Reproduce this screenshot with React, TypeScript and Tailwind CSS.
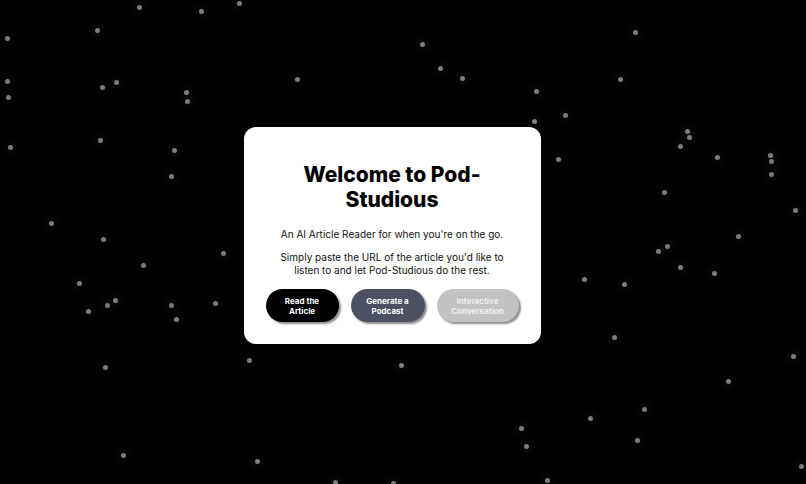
import React from 'react'

// particle field behind the welcome card
const particles: [number, number][] = [
  [139, 7], [201, 11], [239, 3], [97, 30], [7, 38], [7, 81], [8, 97], [102, 87], [116, 82],
  [186, 92], [187, 101], [10, 147], [100, 140], [174, 150], [635, 32], [620, 79], [565, 115],
  [687, 131], [689, 137], [680, 146], [717, 157], [770, 155], [558, 159], [422, 44], [440, 68],
  [462, 78], [297, 79], [536, 91], [534, 121], [171, 176], [51, 223], [103, 239], [223, 253],
  [143, 265], [79, 283], [115, 300], [107, 305], [88, 311], [171, 305], [176, 319], [215, 303],
  [771, 161], [771, 174], [664, 192], [795, 210], [738, 236], [667, 246], [658, 251], [680, 267],
  [714, 273], [584, 279], [624, 284], [105, 367], [249, 360], [123, 455], [257, 461], [401, 365],
  [521, 428], [526, 446], [335, 482], [393, 483], [614, 337], [793, 356], [728, 381], [644, 409],
  [590, 418], [637, 440], [547, 480], [801, 466],
]

function ParticleField() {
  return (
    <div className="absolute inset-0 overflow-hidden">
      {particles.map(([x, y], i) => (
        <span
          key={i}
          className="absolute h-[5px] w-[5px] rounded-full bg-[#7c7c7c] blur-[0.4px] shadow-[0_0_8px_3px_rgba(255,255,255,0.05)]"
          style={{ left: x - 2.5, top: y - 2.5 }}
        />
      ))}
    </div>
  )
}

export default function App() {
  return (
    <div
      className="relative h-[484px] w-full overflow-hidden bg-black"
      style={{ fontFamily: 'Inter, "Noto Sans", sans-serif' }}
    >
      <ParticleField />

      <div className="relative flex h-full items-center justify-center pr-[22px] pb-[13px]">
        <div className="w-[297px] rounded-[12px] bg-white px-[22px] pt-[35px] pb-[22px] text-center">
          <h1 className="text-[21px] font-extrabold leading-[25px] text-black">
            Welcome to Pod-Studious
          </h1>

          <p className="mt-[16px] text-[10px] leading-[13px] text-[#111]">
            An AI Article Reader for when you're on the go.
          </p>
          <p className="mt-[10px] px-[10px] text-[10px] leading-[13px] text-[#111]">
            Simply paste the URL of the article you'd like to listen to and let Pod-Studious do
            the rest.
          </p>

          <div className="mt-[12px] flex items-center justify-between">
            <button className="flex h-[33px] w-[73px] items-center justify-center rounded-full bg-black text-[8px] font-bold leading-[10px] text-white shadow-[2px_2px_2px_rgba(0,0,0,0.45)]">
              Read the
              <br />
              Article
            </button>
            <button className="flex h-[33px] w-[74px] items-center justify-center rounded-full bg-[#4b5160] text-[8px] font-bold leading-[10px] text-white shadow-[2px_2px_2px_rgba(0,0,0,0.45)]">
              Generate a
              <br />
              Podcast
            </button>
            <button className="flex h-[33px] w-[82px] items-center justify-center rounded-full bg-[#c2c2c2] text-[8px] font-bold leading-[10px] text-[#eeeeee] shadow-[2px_2px_2px_rgba(0,0,0,0.45)]">
              Interactive
              <br />
              Conversation
            </button>
          </div>
        </div>
      </div>
    </div>
  )
}
